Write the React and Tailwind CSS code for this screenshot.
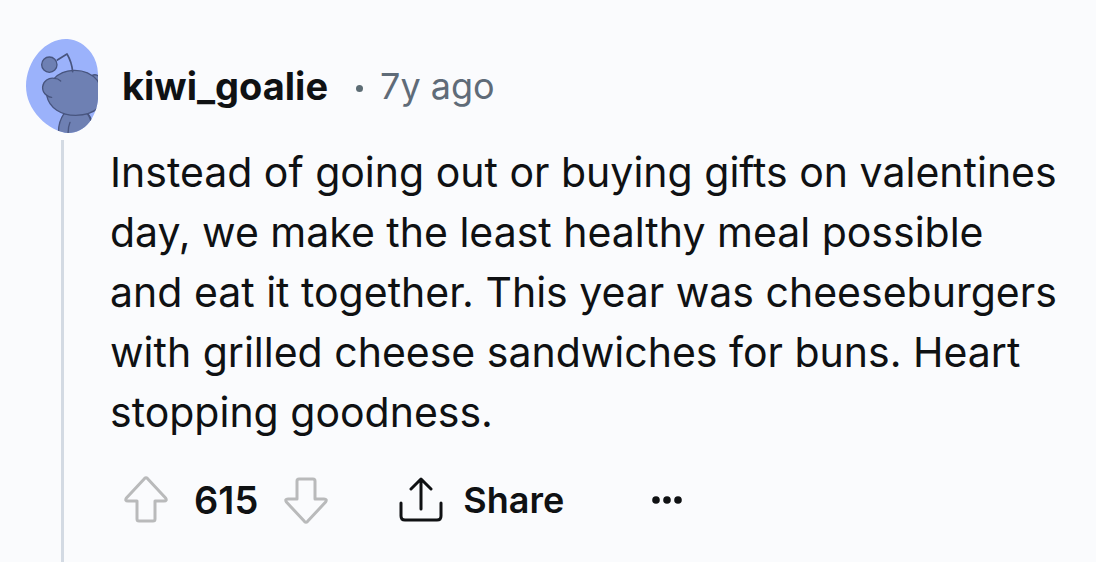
import React from 'react';

const comment = {
    author: 'kiwi_goalie',
    age: '7y ago',
    score: 615,
    body: 'Instead of going out or buying gifts on valentines day, we make the least healthy meal possible and eat it together. This year was cheeseburgers with grilled cheese sandwiches for buns. Heart stopping goodness.',
};

const Avatar = () => (
    <svg className="w-[72px] h-[94px] shrink-0" viewBox="48 42 216 282" role="img" aria-label="avatar">
        <defs>
            <clipPath id="avatar-shape">
                <path d="M173 42C200 44 226 59 244 84C257 103 263 123 264 146V222C262 247 253 272 238 292C221 314 198 324 176 324C148 324 113 305 89 279C63 252 48 218 48 183C48 147 62 109 87 81C111 55 142 41 173 42Z" />
            </clipPath>
        </defs>
        <g clipPath="url(#avatar-shape)">
            <rect x="48" y="42" width="216" height="282" fill="#9bb2fb" />
            <g fill="#6e80b3" stroke="#48557f" strokeWidth="4" strokeLinecap="round" strokeLinejoin="round">
                <path d="M146 330C144 308 149 285 162 266H234C246 280 250 300 251 330Z" />
                <path d="M180 292C175 304 174 316 174 330M232 266C240 278 243 286 243 294" fill="none" />
                <path d="M246 151C256 147 266 152 272 160V180H250Z" />
                <path d="M133 160C147 145 166 137 190 136C218 135 245 146 262 166L275 190V235C264 254 238 270 197 271C154 271 118 250 110 211C101 205 97 196 98 185C100 168 116 157 133 160Z" />
                <path d="M133 160C141 160 147 163 152 168M110 211C114 215 119 217 125 217" fill="none" />
                <path d="M142 105L171 87C180 102 186 120 188 140" fill="none" strokeWidth="5" />
                <circle cx="118" cy="119" r="23" />
            </g>
        </g>
    </svg>
);

const ArrowIcon = ({ className }) => (
    <svg className={className} width="44" height="50" viewBox="0 0 44 50" fill="none" stroke="#b9babb" strokeWidth="3" strokeLinejoin="round">
        <path d="M20.6 3.4Q22 2 23.4 3.4L41.6 23Q43.4 26 40 26H31V44Q31 46 29 46H15Q13 46 13 44V26H4Q.6 26 2.4 23Z" />
    </svg>
);

const ShareIcon = () => (
    <svg width="44" height="46" viewBox="0 0 44 46" fill="none" stroke="#0f1113" strokeWidth="3" strokeLinecap="round" strokeLinejoin="round">
        <path d="M22 32V3M12 12L22 2L32 12" />
        <path d="M2 26V39Q2 43 6 43H38Q42 43 42 39V26" />
    </svg>
);

const MoreIcon = () => (
    <svg width="30" height="8" viewBox="0 0 30 8" fill="#0f1113">
        <circle cx="4" cy="4" r="3.8" />
        <circle cx="15" cy="4" r="3.8" />
        <circle cx="26" cy="4" r="3.8" />
    </svg>
);

const App = () => {
    return (
        <main className="min-h-screen flex bg-[#fafbfd] text-[#0f1113] font-['Inter',sans-serif] pl-[26px] pr-8">
            <div className="flex flex-col items-center shrink-0 pt-[39px]">
                <Avatar />
                <div className="w-[3px] grow mt-[7px] bg-[#d3dae3]"></div>
            </div>

            <article className="grow min-w-0 pl-3 pt-[62px] pb-6">
                <header className="flex items-center pl-3 leading-[48px]">
                    <a href="#author" className="text-[38px] font-bold">{comment.author}</a>
                    <span className="size-[7px] rounded-full bg-[#5c6c74] mt-1 ml-7 mr-[17px]"></span>
                    <time className="text-[36px] text-[#5f6b78]">{comment.age}</time>
                </header>

                <p className="mt-8 text-[41px] leading-[60px]">{comment.body}</p>

                <div className="flex items-center mt-8 pl-[14px] text-[36px] leading-[52px] font-semibold">
                    <button type="button" aria-label="Upvote">
                        <ArrowIcon />
                    </button>
                    <span className="text-[38px] mx-[26px]">{comment.score}</span>
                    <button type="button" aria-label="Downvote">
                        <ArrowIcon className="rotate-180" />
                    </button>
                    <button type="button" className="flex items-center gap-5 ml-[71px]">
                        <ShareIcon />
                        Share
                    </button>
                    <button type="button" aria-label="More options" className="ml-[88px]">
                        <MoreIcon />
                    </button>
                </div>
            </article>
        </main>
    );
};

export default App;
